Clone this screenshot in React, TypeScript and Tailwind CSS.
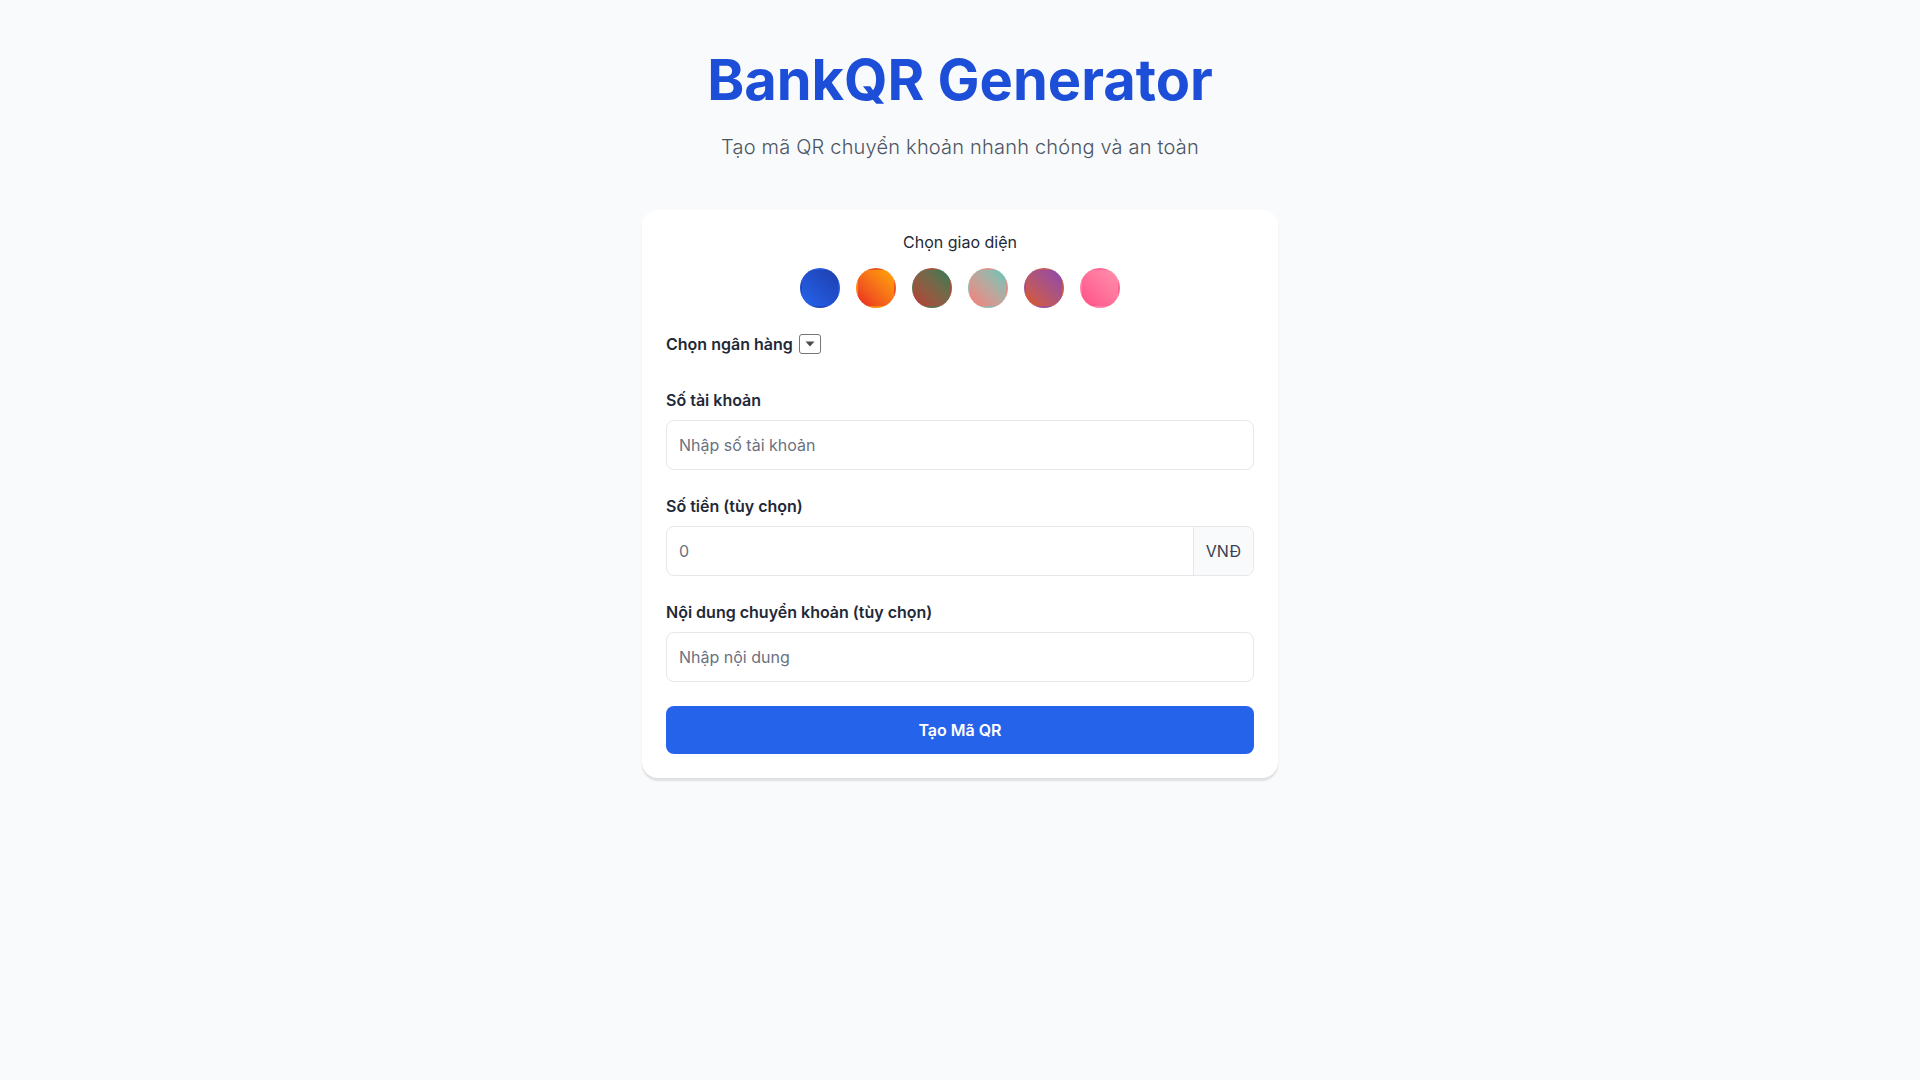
import React from 'react';

const themes = [
  'bg-linear-to-tr from-[#2563eb] to-[#1e3fae]',
  'bg-linear-to-tr from-[#e8221f] to-[#ffa500]',
  'bg-linear-to-tr from-[#b53a35] to-[#1f7a55]',
  'bg-linear-to-tr from-[#f47c7c] to-[#5cc6bb]',
  'bg-linear-to-tr from-[#d9581a] to-[#8e44ad]',
  'bg-linear-to-tr from-[#ff4f87] to-[#ff8fae]',
];

const Field: React.FC<{ label: string; children: React.ReactNode }> = ({ label, children }) => (
  <div>
    <label className="block mb-2 text-base leading-6 font-semibold text-[#1f2937]">{label}</label>
    {children}
  </div>
);

export default function App() {
  return (
    <div className="min-h-screen bg-[#f9fafb] pt-[52px] font-['Inter',sans-serif]">
      <h1 className="text-center text-[56px] leading-none font-bold text-[#1d4ed8]">BankQR Generator</h1>
      <p className="mt-[25px] text-center text-xl leading-7 font-light tracking-[0.01em] text-[#4b5563]">
        Tạo mã QR chuyển khoản nhanh chóng và an toàn
      </p>

      <div className="mx-auto mt-[49px] w-[636px] bg-white rounded-2xl px-6 pt-5 pb-6 shadow-[0_3px_2px_0_rgba(0,0,0,0.1)]">
        <div className="text-center text-base leading-6 text-[#1f2937]">Chọn giao diện</div>
        <div className="mt-3.5 flex justify-center gap-4">
          {themes.map((t, i) => (
            <button key={i} className={`w-10 h-10 rounded-full border-2 border-transparent ${t}`} />
          ))}
        </div>

        <div className="mt-6 flex items-center h-6">
          <span className="text-base font-semibold text-[#1f2937]">Chọn ngân hàng</span>
          <span className="ml-1.5 w-[22px] h-5 flex items-center justify-center border border-[#767676] rounded-[3px] bg-white">
            <svg width="10" height="6" viewBox="0 0 10 6">
              <path d="M0.5 0.5 L9.5 0.5 L5 5.5 Z" fill="#4b4b4b" />
            </svg>
          </span>
        </div>

        <div className="mt-8 flex flex-col gap-6">
          <Field label="Số tài khoản">
            <input
              className="w-full px-3 py-3 text-base leading-6 border border-[#e5e7eb] rounded-lg outline-none placeholder:text-[#6b7280]"
              placeholder="Nhập số tài khoản"
            />
          </Field>

          <Field label="Số tiền (tùy chọn)">
            <div className="flex border border-[#e5e7eb] rounded-lg">
              <input
                className="flex-1 min-w-0 px-3 py-3 text-base leading-6 rounded-l-lg outline-none placeholder:text-[#6b7280]"
                placeholder="0"
              />
              <span className="flex items-center px-3 bg-[#f9fafb] border-l border-[#e5e7eb] rounded-r-lg text-base text-[#374151]">
                VNĐ
              </span>
            </div>
          </Field>

          <Field label="Nội dung chuyển khoản (tùy chọn)">
            <input
              className="w-full px-3 py-3 text-base leading-6 border border-[#e5e7eb] rounded-lg outline-none placeholder:text-[#6b7280]"
              placeholder="Nhập nội dung"
            />
          </Field>

          <button className="w-full h-12 bg-[#2563eb] rounded-lg text-white text-base font-semibold">
            Tạo Mã QR
          </button>
        </div>
      </div>
    </div>
  );
}
